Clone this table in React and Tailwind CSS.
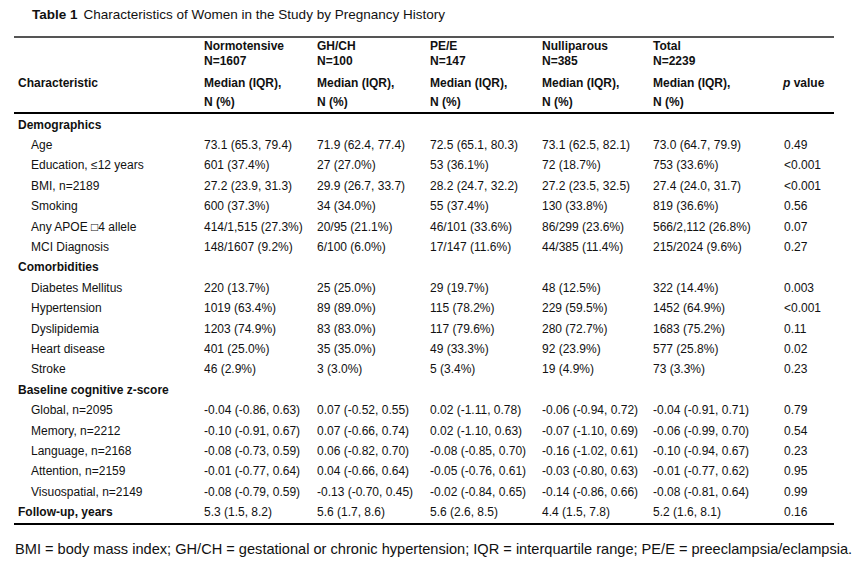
const cols = "grid grid-cols-[186px_113px_113px_112px_111px_130px_1fr]";

const groups = [
  {
    title: "Demographics",
    rows: [
      ["Age", "73.1 (65.3, 79.4)", "71.9 (62.4, 77.4)", "72.5 (65.1, 80.3)", "73.1 (62.5, 82.1)", "73.0 (64.7, 79.9)", "0.49"],
      ["Education, ≤12 years", "601 (37.4%)", "27 (27.0%)", "53 (36.1%)", "72 (18.7%)", "753 (33.6%)", "<0.001"],
      ["BMI, n=2189", "27.2 (23.9, 31.3)", "29.9 (26.7, 33.7)", "28.2 (24.7, 32.2)", "27.2 (23.5, 32.5)", "27.4 (24.0, 31.7)", "<0.001"],
      ["Smoking", "600 (37.3%)", "34 (34.0%)", "55 (37.4%)", "130 (33.8%)", "819 (36.6%)", "0.56"],
      ["Any APOE \u25A14 allele", "414/1,515 (27.3%)", "20/95 (21.1%)", "46/101 (33.6%)", "86/299 (23.6%)", "566/2,112 (26.8%)", "0.07"],
      ["MCI Diagnosis", "148/1607 (9.2%)", "6/100 (6.0%)", "17/147 (11.6%)", "44/385 (11.4%)", "215/2024 (9.6%)", "0.27"],
    ],
  },
  {
    title: "Comorbidities",
    rows: [
      ["Diabetes Mellitus", "220 (13.7%)", "25 (25.0%)", "29 (19.7%)", "48 (12.5%)", "322 (14.4%)", "0.003"],
      ["Hypertension", "1019 (63.4%)", "89 (89.0%)", "115 (78.2%)", "229 (59.5%)", "1452 (64.9%)", "<0.001"],
      ["Dyslipidemia", "1203 (74.9%)", "83 (83.0%)", "117 (79.6%)", "280 (72.7%)", "1683 (75.2%)", "0.11"],
      ["Heart disease", "401 (25.0%)", "35 (35.0%)", "49 (33.3%)", "92 (23.9%)", "577 (25.8%)", "0.02"],
      ["Stroke", "46 (2.9%)", "3 (3.0%)", "5 (3.4%)", "19 (4.9%)", "73 (3.3%)", "0.23"],
    ],
  },
  {
    title: "Baseline cognitive z-score",
    rows: [
      ["Global, n=2095", "-0.04 (-0.86, 0.63)", "0.07 (-0.52, 0.55)", "0.02 (-1.11, 0.78)", "-0.06 (-0.94, 0.72)", "-0.04 (-0.91, 0.71)", "0.79"],
      ["Memory, n=2212", "-0.10 (-0.91, 0.67)", "0.07 (-0.66, 0.74)", "0.02 (-1.10, 0.63)", "-0.07 (-1.10, 0.69)", "-0.06 (-0.99, 0.70)", "0.54"],
      ["Language, n=2168", "-0.08 (-0.73, 0.59)", "0.06 (-0.82, 0.70)", "-0.08 (-0.85, 0.70)", "-0.16 (-1.02, 0.61)", "-0.10 (-0.94, 0.67)", "0.23"],
      ["Attention, n=2159", "-0.01 (-0.77, 0.64)", "0.04 (-0.66, 0.64)", "-0.05 (-0.76, 0.61)", "-0.03 (-0.80, 0.63)", "-0.01 (-0.77, 0.62)", "0.95"],
      ["Visuospatial, n=2149", "-0.08 (-0.79, 0.59)", "-0.13 (-0.70, 0.45)", "-0.02 (-0.84, 0.65)", "-0.14 (-0.86, 0.66)", "-0.08 (-0.81, 0.64)", "0.99"],
    ],
  },
];

const heads = [
  ["Normotensive", "N=1607"],
  ["GH/CH", "N=100"],
  ["PE/E", "N=147"],
  ["Nulliparous", "N=385"],
  ["Total", "N=2239"],
];

function Row({ cells, bold, indent }) {
  return (
    <div className={`${cols} h-[20.4px] items-center`}>
      {cells.map((c, i) => (
        <div
          key={i}
          className={`whitespace-nowrap ${i === 0 && bold ? "font-bold" : ""} ${i === 0 && indent ? "pl-[13px]" : ""} ${i === 6 ? "pl-[1px]" : ""}`}
        >
          {c}
        </div>
      ))}
    </div>
  );
}

export default function App() {
  return (
    <div className="w-[865px] h-[563px] bg-white text-[#111] font-['Liberation_Sans',Arial,sans-serif] overflow-hidden">

      {/* TITLE */}
      <div className="pl-[32px] pt-[7px] text-[13.5px] leading-[16px]">
        <span className="font-bold">Table 1</span>
        <span className="ml-[6px]">Characteristics of Women in the Study by Pregnancy History</span>
      </div>

      {/* TABLE */}
      <div className="ml-[14px] w-[820px] mt-[13px] text-[12px]">
        <div className="h-[1.5px] bg-[#555]" />

        <div className={`${cols} pl-[4px] pt-[1px] font-bold`}>
          <div className="pt-[35px] leading-[19px]">Characteristic</div>
          {heads.map(([name, n]) => (
            <div key={name} className="flex flex-col">
              <div className="leading-[15px]">{name}</div>
              <div className="leading-[15px]">{n}</div>
              <div className="mt-[5px] leading-[19px]">Median (IQR),</div>
              <div className="leading-[19px]">N (%)</div>
            </div>
          ))}
          <div className="pt-[35px] leading-[19px]">
            <span className="italic">p</span> value
          </div>
        </div>

        <div className="h-[2px] bg-black" />

        <div className="pl-[4px] pt-[1px]">
          {groups.map((g) => (
            <div key={g.title}>
              <Row cells={[g.title, "", "", "", "", "", ""]} bold />
              {g.rows.map((r) => (
                <Row key={r[0]} cells={r} indent />
              ))}
            </div>
          ))}
          <Row cells={["Follow-up, years", "5.3 (1.5, 8.2)", "5.6 (1.7, 8.6)", "5.6 (2.6, 8.5)", "4.4 (1.5, 7.8)", "5.2 (1.6, 8.1)", "0.16"]} bold />
        </div>

        <div className="h-[2px] bg-black mt-[1px]" />
      </div>

      {/* FOOTNOTE */}
      <div className="pl-[15px] mt-[16px] text-[14.6px] leading-[17px] whitespace-nowrap">
        BMI = body mass index; GH/CH = gestational or chronic hypertension; IQR = interquartile range; PE/E = preeclampsia/eclampsia.
      </div>
    </div>
  );
}
